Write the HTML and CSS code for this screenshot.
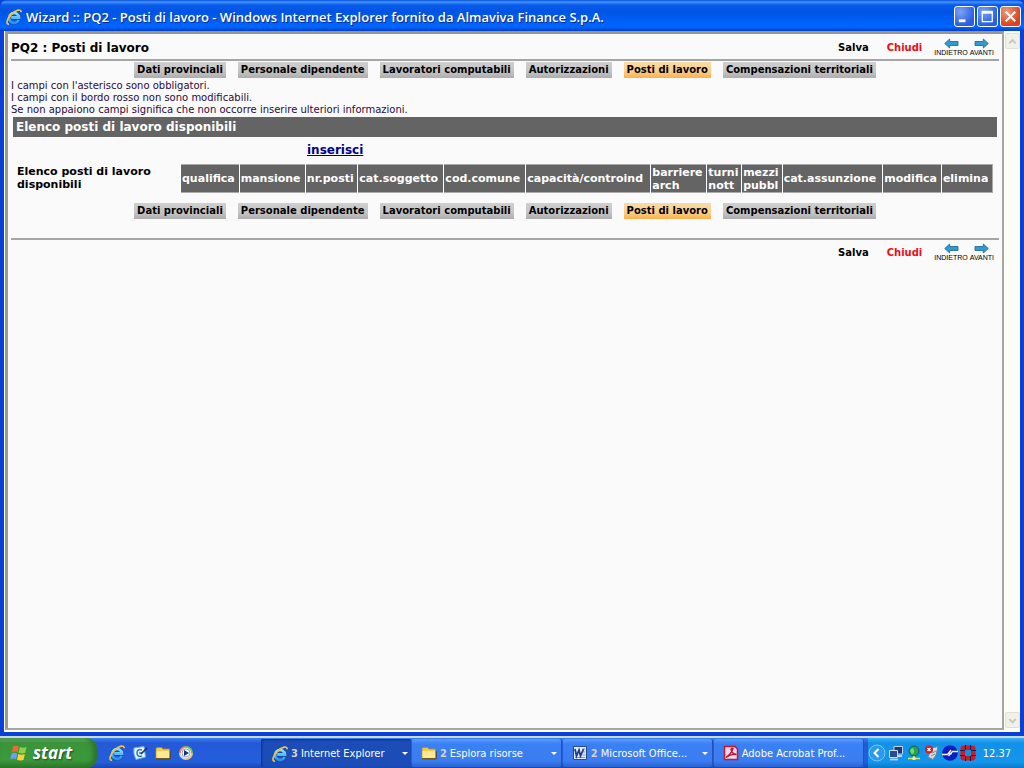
FILE: index.html
```html
<!DOCTYPE html>
<html lang="it">
<head>
<meta charset="utf-8">
<meta name="viewport" content="width=device-width, initial-scale=1">
<title>Wizard :: PQ2 - Posti di lavoro</title>
<link rel="stylesheet" href="styles.css">
</head>
<body>
<svg class="defs" aria-hidden="true">
  <defs>
    <linearGradient id="eblue" x1="0" y1="0" x2="0" y2="1"><stop offset="0" stop-color="#8fe0ff"/><stop offset="1" stop-color="#2a90ee"/></linearGradient>
    <symbol id="ie" viewBox="0 0 16 16">
      <path d="M12.600 11A5 5 0 1 1 13 8.500H5.200" fill="none" stroke="#0a4a9c" stroke-width="3.800"/>
      <path d="M12.600 11A5 5 0 1 1 13 8.500H5.200" fill="none" stroke="url(#eblue)" stroke-width="2.800"/>
      <path d="M3 15.200C-.6 15.600 1 9.600 5.500 5.200S15.200-.4 15.200 3.200" fill="none" stroke="#edc04a" stroke-width="1.700"/>
    </symbol>
    <symbol id="folder" viewBox="0 0 16 16">
      <path d="M1 13.500V3.500L2 2.500H6.500L8 4H14.500V13.500Z" fill="#f3c94e" stroke="#b98a1c" stroke-width=".8"/>
      <path d="M1.500 6H14.500V13H1.500Z" fill="#ffe992"/>
      <path d="M1 13.800H15.200V6" fill="none" stroke="#54430e"/>
    </symbol>
    <symbol id="left" viewBox="0 0 15 11"><path d="M.7 5.500 5.700 1V3.500H14V7.500H5.700V10Z" fill="#2f9bd0" stroke="#236f98" stroke-width=".9"/></symbol>
    <symbol id="right" viewBox="0 0 15 11"><path d="M14.300 5.500 9.300 1V3.500H1V7.500H9.300V10Z" fill="#2f9bd0" stroke="#236f98" stroke-width=".9"/></symbol>
  </defs>
</svg>

<div class="window">
  <header class="titlebar">
    <svg class="icon"><use href="#ie"/></svg>
    <span class="caption">Wizard :: PQ2 - Posti di lavoro - Windows Internet Explorer fornito da Almaviva Finance S.p.A.</span>
    <div class="controls">
      <button class="control" aria-label="Riduci a icona"><svg viewBox="0 0 20 20"><path d="M4 14.500H11" stroke="#fff" stroke-width="3"/></svg></button>
      <button class="control" aria-label="Ingrandisci"><svg viewBox="0 0 20 20"><path d="M4.500 5.500H15V15.500H4.500Z" fill="none" stroke="#fff" stroke-width="1.300"/><path d="M4 5.500H15.600" stroke="#fff" stroke-width="3"/></svg></button>
      <button class="control control-close" aria-label="Chiudi finestra"><svg viewBox="0 0 20 20"><path d="M5 5 15 15M15 5 5 15" stroke="#fff" stroke-width="2.200"/></svg></button>
    </div>
  </header>

  <div class="client">
    <main class="page">
      <div class="toolbar">
        <h1 class="page-title">PQ2 : Posti di lavoro</h1>
        <div class="actions">
          <button class="action">Salva</button>
          <button class="action action-close">Chiudi</button>
          <div class="steps">
            <button class="step"><svg class="arrow"><use href="#left"/></svg>INDIETRO</button>
            <button class="step"><svg class="arrow"><use href="#right"/></svg>AVANTI</button>
          </div>
        </div>
      </div>
      <nav class="tabs">
        <a class="tab" href="#">Dati provinciali</a>
        <a class="tab" href="#">Personale dipendente</a>
        <a class="tab" href="#">Lavoratori computabili</a>
        <a class="tab" href="#">Autorizzazioni</a>
        <a class="tab tab-active" href="#">Posti di lavoro</a>
        <a class="tab" href="#">Compensazioni territoriali</a>
      </nav>
      <div class="notes">
        <p>I campi con l'asterisco sono obbligatori.</p>
        <p>I campi con il bordo rosso non sono modificabili.</p>
        <p>Se non appaiono campi significa che non occorre inserire ulteriori informazioni.</p>
      </div>
      <h2 class="section">Elenco posti di lavoro disponibili</h2>
      <div class="list">
        <div class="list-label" id="list-label">Elenco posti di lavoro disponibili</div>
        <div class="list-body">
          <a class="insert" href="#">inserisci</a>
          <table class="grid" aria-labelledby="list-label">
            <thead><tr>
              <th>qualifica</th><th>mansione</th><th>nr.posti</th><th>cat.soggetto</th><th>cod.comune</th><th>capacità/controind</th><th>barriere<br>arch</th><th>turni<br>nott</th><th>mezzi<br>pubbl</th><th>cat.assunzione</th><th>modifica</th><th>elimina</th>
            </tr></thead>
          </table>
        </div>
      </div>
      <nav class="tabs">
        <a class="tab" href="#">Dati provinciali</a>
        <a class="tab" href="#">Personale dipendente</a>
        <a class="tab" href="#">Lavoratori computabili</a>
        <a class="tab" href="#">Autorizzazioni</a>
        <a class="tab tab-active" href="#">Posti di lavoro</a>
        <a class="tab" href="#">Compensazioni territoriali</a>
      </nav>
      <div class="toolbar toolbar-bottom">
        <div class="actions">
          <button class="action">Salva</button>
          <button class="action action-close">Chiudi</button>
          <div class="steps">
            <button class="step"><svg class="arrow"><use href="#left"/></svg>INDIETRO</button>
            <button class="step"><svg class="arrow"><use href="#right"/></svg>AVANTI</button>
          </div>
        </div>
      </div>
    </main>
    <div class="scrollbar">
      <button class="scroll" aria-label="Su"><svg viewBox="0 0 14 14"><path d="M3.500 9 7 5.500 10.500 9" fill="none" stroke="#c9c7ba" stroke-width="2"/></svg></button>
      <button class="scroll" aria-label="Giù"><svg viewBox="0 0 14 14"><path d="M3.500 5.500 7 9 10.500 5.500" fill="none" stroke="#c9c7ba" stroke-width="2"/></svg></button>
    </div>
  </div>
</div>

<footer class="taskbar">
  <button class="start">
    <svg class="flag" viewBox="0 0 18 18">
      <path d="M3 2.500Q6 .8 8.800 2.500L7.600 8.200Q5 6.800 1.800 8.200Z" fill="#ee6a35"/>
      <path d="M9.800 3Q13 4.600 16.500 3L15.200 8.800Q12 10.200 8.600 8.700Z" fill="#8fd04a"/>
      <path d="M1.500 9.400Q4.500 8 7.300 9.400L6 15.200Q3.500 13.800.3 15.200Z" fill="#6f9cf5"/>
      <path d="M8.300 9.900Q11.500 11.400 14.900 10L13.600 15.800Q10.500 17.300 7 15.700Z" fill="#fbd03b"/>
    </svg>
    start
  </button>
  <div class="quick">
    <button class="quick-item" aria-label="Internet Explorer"><svg class="icon"><use href="#ie"/></svg></button>
    <button class="quick-item" aria-label="Mostra desktop"><svg class="icon" viewBox="0 0 16 16"><path d="M2 3 12 1.500 13.500 12 4 14.500Q1 9 2 3Z" fill="#eaf5fd" stroke="#6fb0e4"/><path d="M10 5Q5 3.500 5 8T10 11M7 8H10" fill="none" stroke="#2179c4" stroke-width="1.500"/><path d="M9 9 15 3" stroke="#1d2f66" stroke-width="1.600"/></svg></button>
    <button class="quick-item" aria-label="Cartella"><svg class="icon"><use href="#folder"/></svg></button>
    <button class="quick-item" aria-label="Media Player"><svg class="icon" viewBox="0 0 16 16"><circle cx="8" cy="8" r="6" fill="#fff"/><path d="M2 8A6 6 0 0 1 8 2" fill="none" stroke="#f08a60" stroke-width="2"/><path d="M8 2A6 6 0 0 1 14 8" fill="none" stroke="#7cc060" stroke-width="2"/><path d="M14 8A6 6 0 0 1 8 14" fill="none" stroke="#f0c468" stroke-width="2"/><path d="M8 14A6 6 0 0 1 2 8" fill="none" stroke="#c4d4f4" stroke-width="2"/><circle cx="8" cy="8" r="4" fill="#fff" stroke="#8fa6d4"/><path d="M6 5V11L11 8Z" fill="#14367e"/></svg></button>
  </div>
  <div class="tasks">
    <button class="task task-active"><svg class="icon"><use href="#ie"/></svg><span class="count">3</span><span class="task-name">Internet Explorer</span><span class="caret"></span></button>
    <button class="task"><svg class="icon"><use href="#folder"/></svg><span class="count">2</span><span class="task-name">Esplora risorse</span><span class="caret"></span></button>
    <button class="task"><svg class="icon" viewBox="0 0 16 16"><path d="M1.500 1.500H14.500V14.500H1.500Z" fill="#e8eefa" stroke="#27488f"/><path d="M10.500 4H13.500M10.500 7H13.500M10.500 10H13.500M3 12.500H13.500" stroke="#7b93c7"/><path d="M3 4 4.500 11 7 5 8.500 11 11.500 4" fill="none" stroke="#1c3c8a" stroke-width="1.800"/></svg><span class="count">2</span><span class="task-name">Microsoft Office...</span><span class="caret"></span></button>
    <button class="task"><svg class="icon" viewBox="0 0 16 16"><path d="M1.500 1.500H12L14.500 4V14.500H1.500Z" fill="#f0d5ee" stroke="#c4182c" stroke-width="1.500"/><path d="M3 12.500Q9 8 10 3.500Q8 3 8 4.500Q9 9 13.500 9.500Q8 8.500 3 12.500" fill="none" stroke="#b0182e" stroke-width="1.300"/></svg><span class="task-name">Adobe Acrobat Prof...</span></button>
  </div>
  <div class="tray">
    <button class="expand" aria-label="Mostra icone nascoste"><svg viewBox="0 0 18 18"><circle cx="9" cy="9" r="8" fill="#2b9aec" stroke="#7cc6f6"/><path d="M10.500 5 6.500 9 10.500 13" fill="none" stroke="#fff" stroke-width="2"/></svg></button>
    <svg class="tray-icon" viewBox="0 0 16 16"><path d="M6 1.500H14.500V9H6Z" fill="#1c3775" stroke="#c4cfe0"/><path d="M8 10H14V12H8Z" fill="#c4cfe0"/><path d="M1.500 5.500H9.500V12.500H1.500Z" fill="#284b93" stroke="#d2dae7"/><path d="M2 14.500H10" stroke="#c4cfe0" stroke-width="1.800"/></svg>
    <svg class="tray-icon" viewBox="0 0 16 16"><circle cx="8" cy="6" r="5" fill="#28a34f" stroke="#125c6d"/><path d="M4 5Q7 1.500 8 5T5.500 9Z" fill="#6fdc74"/><path d="M8 11V13M2 13.500H14" stroke="#d9e84a" stroke-width="1.600"/><path d="M6.500 12H9.500V15H6.500Z" fill="#e9f08c"/></svg>
    <svg class="tray-icon" viewBox="0 0 16 16"><path d="M8 3 14 1.500 12 10 9 14.500 4 12Z" fill="#d9dde2" stroke="#77818f"/><path d="M8 8 12 6M7 11 11 9" stroke="#7c8896"/><circle cx="5" cy="4.500" r="4" fill="#d21d22"/><path d="M3.500 3 6.500 6M6.500 3 3.500 6" stroke="#fff" stroke-width="1.300"/></svg>
    <svg class="tray-icon" viewBox="0 0 16 16"><circle cx="8" cy="8" r="7.800" fill="#0a1fc0"/><path d="M0 9.500H5.500L9 5M6.500 11 10.500 6.500H16M6 8.500H10" fill="none" stroke="#f0f2dc" stroke-width="1.300"/></svg>
    <svg class="tray-icon" viewBox="0 0 16 16"><rect x=".5" y=".5" width="15" height="15" rx="3" fill="#d01a2a"/><path d="M5.500 0V5M10.500 0V5M5.500 11V16M10.500 11V16M0 5.500H5M0 10.500H5M11 5.500H16M11 10.500H16" stroke="#13244f" stroke-width="1.200"/><path d="M5 5H11V11H5Z" fill="#1290e0"/></svg>
    <time class="clock">12.37</time>
  </div>
</footer>
</body>
</html>
```
FILE: styles.css
```css
* { box-sizing: border-box; }
body {
  margin: 0;
  min-height: 100vh;
  display: flex;
  flex-direction: column;
  background: #fafafa;
  font-family: Verdana, "DejaVu Sans", sans-serif;
  font-size: 11px;
  color: #000;
}
button { margin: 0; padding: 0; border: 0; background: none; font: inherit; color: inherit; }
h1, h2, p { margin: 0; }
svg { display: block; flex: none; }
.defs { position: absolute; width: 0; height: 0; }
.icon { width: 16px; height: 16px; }

.window { flex: 1; display: flex; flex-direction: column; background: #0a3fd8; }
.titlebar {
  height: 31px;
  display: flex;
  align-items: center;
  gap: 4px;
  padding: 2px 3px 0 6px;
  border-radius: 7px 7px 0 0;
  background: linear-gradient(#0a50dc 0, #3f94ff 2px, #0a5ae8 5px, #0054e3 12px, #0060fa 22px, #0066ff 27px, #0040c8 31px);
}
.caption {
  flex: 1;
  color: #fff;
  font: 600 13px/18px "Open Sans", "Noto Sans", sans-serif;
  text-shadow: 1px 1px #0a2a90;
  white-space: nowrap;
  overflow: hidden;
}
.controls { display: flex; gap: 2px; }
.control {
  width: 21px;
  height: 21px;
  border: 1px solid #fff;
  border-radius: 3px;
  background: radial-gradient(circle at 30% 25%, #7ba2f5, #2a5fe0 70%);
}
.control-close { background: radial-gradient(circle at 30% 25%, #f09a80, #d9431f 70%); }

.client { flex: 1; display: flex; margin: 0 4px 4px; padding: 0 0 2px 1px; background: #fefefb; }
.page {
  flex: 1;
  min-width: 0;
  padding: 0 3px;
  border: solid #a5a5a5;
  border-width: 3px 2px 2px 3px;
  border-left-color: #9a9a92;
  border-top-color: #96968e;
  background: #fafafa;
}
.toolbar { display: flex; align-items: center; height: 27px; padding-top: 2px; border-bottom: 2px solid #a5a5a5; }
.toolbar-bottom { margin-top: 19px; padding-top: 0; border-bottom: 0; border-top: 2px solid #a5a5a5; }
.page-title { font-size: 12px; line-height: 16px; }
.actions { display: flex; align-items: center; gap: 18px; margin-left: auto; padding-right: 5px; }
.action { font-weight: bold; font-size: 10px; line-height: 14px; }
.action-close { color: #e8101c; }
.steps { display: flex; gap: 2px; margin-left: -6px; }
.step {
  display: flex;
  flex-direction: column;
  align-items: center;
  font: 7px/8px "Liberation Sans", Arial, sans-serif;
}
.arrow { width: 15px; height: 11px; }

.tabs { display: flex; justify-content: center; gap: 12px; margin-top: 1px; }
.tab {
  padding: 0 3px;
  font-weight: bold;
  font-size: 10px;
  line-height: 16px;
  white-space: nowrap;
  color: #000;
  text-decoration: none;
  background: linear-gradient(#cfcfcf, #c4c4c4 60%, #adadad);
}
.tab-active { background: linear-gradient(#f9dba6, #fbcd85 60%, #fbb04e); }

.notes { margin-top: 2px; font-size: 10px; line-height: 12px; color: #2a0a3a; }
.section {
  margin: 1px 2px 0;
  padding: 0 3px;
  font-size: 12px;
  line-height: 20px;
  color: #fff;
  background: #646464;
}
.list { display: flex; align-items: flex-end; margin: 6px 6px 10px; }
.list-label { width: 163px; padding-bottom: 2px; font-size: 11px; line-height: 13px; font-weight: bold; }
.list-body { flex: 1; min-width: 0; }
.insert { display: inline-block; margin: 0 0 7px 127px; font-size: 12px; line-height: 14px; font-weight: bold; color: #00008b; }
.grid { width: 100%; border-collapse: collapse; border: 1px solid #aaa; background: #646464; }
.grid th {
  height: 28px;
  padding: 0 1px;
  border-left: 1px solid #fff;
  text-align: left;
  font-size: 11px;
  line-height: 13px;
  color: #fff;
}

.scrollbar { width: 16px; display: flex; flex-direction: column; justify-content: space-between; padding: 2px 0 2px 1px; background: #fdfdf8; }
.scroll { width: 15px; height: 16px; border: 1px solid #e2e1d6; border-radius: 2px; background: #f2f1e8; }

.taskbar {
  display: flex;
  height: 32px;
  border-top: 2px solid #c8d8f4;
  color: #fff;
  font-family: Tahoma, "DejaVu Sans Condensed", "Noto Sans", sans-serif;
  background: linear-gradient(#3a80ee, #2459d8 5px, #245edb 24px, #1b45b0);
}
.start {
  display: flex;
  align-items: center;
  gap: 5px;
  width: 97px;
  padding-left: 10px;
  border-radius: 0 10px 10px 0;
  font: italic bold 17px/24px "Open Sans", sans-serif;
  text-shadow: 1px 1px 2px #1c4a1c;
  background: linear-gradient(#6cb66a, #3b943b 5px, #3a9a3a 22px, #2c762c);
  box-shadow: inset -4px 0 5px #2b742b;
}
.flag { width: 18px; height: 18px; }
.quick { display: flex; align-items: center; gap: 7px; width: 163px; padding-left: 12px; }
.tasks { flex: 1; min-width: 0; display: flex; gap: 1px; padding: 1px 4px 1px 1px; }
.task {
  flex: 1;
  min-width: 0;
  display: flex;
  align-items: center;
  gap: 3px;
  padding: 0 5px 0 9px;
  border-radius: 2px;
  font-size: 11px;
  white-space: nowrap;
  background: linear-gradient(#5a9bff, #3a80f4 5px, #3a7df0 22px, #2c62d0);
  box-shadow: inset -1px 0 #2450b8;
}
.task-active { padding: 1px 3px 0 11px; background: #1c4cb8; box-shadow: inset 1px 1px 2px #10307c; }
.count { color: #d8d2c0; font-weight: bold; }
.task-name { flex: 1; text-align: left; }
.caret { border: 3px solid transparent; border-top-color: #fff; border-bottom: 0; }
.tray {
  display: flex;
  align-items: center;
  gap: 2px;
  padding: 0 13px 0 0;
  background: linear-gradient(#3ab4f8, #1290e8 5px, #1496ec 24px, #0d78c8);
}
.expand { width: 18px; height: 18px; }
.tray-icon { width: 16px; height: 16px; }
.clock { margin-left: 5px; font-size: 11px; }
```
